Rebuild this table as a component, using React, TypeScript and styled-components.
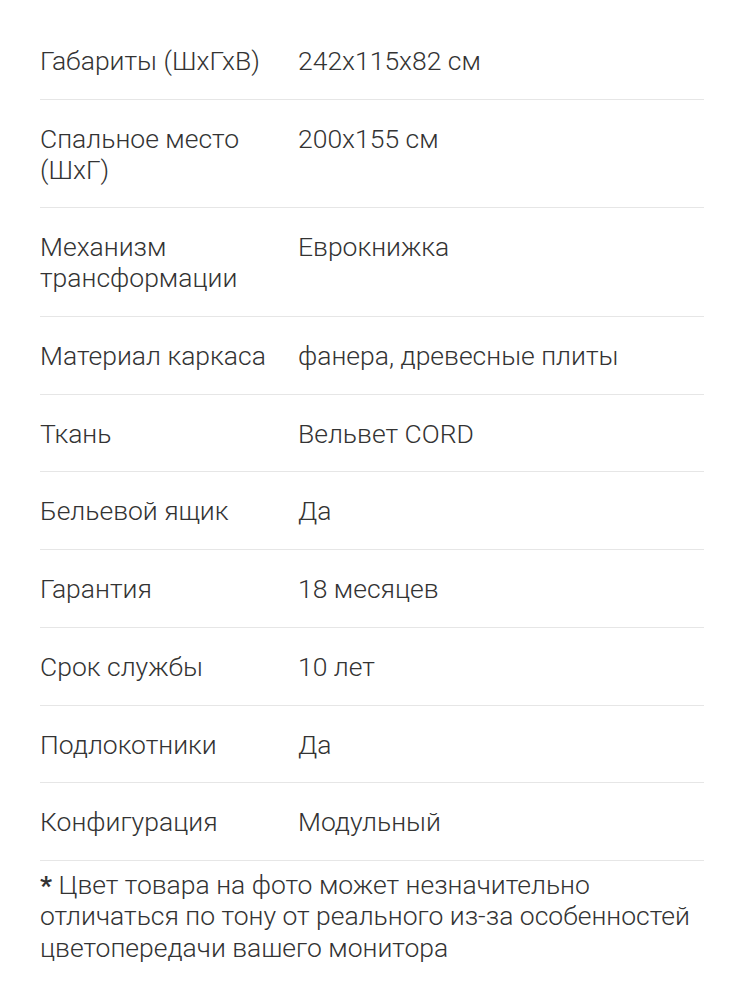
import React from 'react';
import styled, { createGlobalStyle } from 'styled-components';

const GlobalStyle = createGlobalStyle`
  html, body {
    margin: 0;
    padding: 0;
    background: #fff;
  }
  body {
    font-family: Roboto, "Noto Sans", "Liberation Sans", sans-serif;
    font-weight: 300;
    color: #333;
  }
`;

const Page = styled.div`
  width: 664px;
  padding: 22px 40px 40px;
`;

const SpecList = styled.dl`
  margin: 0;
`;

const SpecRow = styled.div`
  display: grid;
  grid-template-columns: 258px 1fr;
  padding: 23px 0 22.7px;
  border-bottom: 1px solid #e6e6e6;
  font-size: 26.5px;
  line-height: 31px;
`;

const Label = styled.dt`
  margin: 0;
  padding-right: 8px;
`;

const Value = styled.dd`
  margin: 0;
`;

const Note = styled.p`
  margin: 8px 0 0;
  font-size: 26.5px;
  line-height: 31.5px;
`;

const Star = styled.span`
  font-weight: 700;
`;

const specs: [string, string][] = [
  ['Габариты (ШхГхВ)', '242x115x82 см'],
  ['Спальное место (ШхГ)', '200x155 см'],
  ['Механизм трансформации', 'Еврокнижка'],
  ['Материал каркаса', 'фанера, древесные плиты'],
  ['Ткань', 'Вельвет CORD'],
  ['Бельевой ящик', 'Да'],
  ['Гарантия', '18 месяцев'],
  ['Срок службы', '10 лет'],
  ['Подлокотники', 'Да'],
  ['Конфигурация', 'Модульный'],
];

const App = () => (
  <>
    <GlobalStyle />
    <Page>
      <SpecList>
        {specs.map(([label, value]) => (
          <SpecRow key={label}>
            <Label>{label}</Label>
            <Value>{value}</Value>
          </SpecRow>
        ))}
      </SpecList>
      <Note>
        <Star>*</Star> Цвет товара на фото может незначительно отличаться по тону от реального из-за особенностей
        цветопередачи вашего монитора
      </Note>
    </Page>
  </>
);

export default App;
